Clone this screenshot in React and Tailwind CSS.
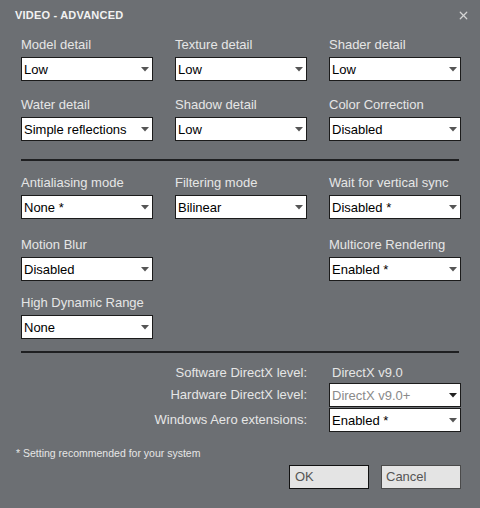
import { X } from 'lucide-react'

const font = { fontFamily: '"Liberation Sans", Arial, sans-serif' }

const Arrow = ({ dark }) => (
  <svg width="8" height="5" viewBox="0 0 8 5" className="shrink-0">
    <path d="M0 0 L8 0 L4 4.5 Z" fill={dark ? '#222' : '#555'} />
  </svg>
)

const Select = ({ value, disabled }) => (
  <div className="h-6 w-[132px] bg-white border border-[#1b1b1b] flex items-center justify-between pl-[2px] pr-[3px]">
    <span className={`text-[13px] leading-none ${disabled ? 'text-[#8a8a8a]' : 'text-black'}`}>{value}</span>
    <Arrow dark={disabled} />
  </div>
)

const Field = ({ label, value }) => (
  <div className="flex flex-col w-[132px]">
    <div className="text-[13px] leading-4 text-[#e6e6e6] whitespace-nowrap mb-1">{label}</div>
    <Select value={value} />
  </div>
)

const Rule = () => <div className="h-[2px] bg-[#1e1f21] mx-[21px] w-[438px]" />

export default function App() {
  return (
    <div className="w-[480px] h-[508px] bg-[#6c6f73] overflow-hidden" style={font}>
      {/* title bar */}
      <div className="flex items-center justify-between pl-[15px] pr-[10px] pt-[8px] h-[22px]">
        <span className="text-[11px] font-bold text-[#f2f2f2] tracking-[0.2px]">VIDEO - ADVANCED</span>
        <X size={13} strokeWidth={2.2} className="text-[#d4d4d4]" />
      </div>

      {/* top block */}
      <div className="px-[21px] pt-[15px] grid grid-cols-[132px_132px_132px] gap-x-[22px] gap-y-[16px]">
        <Field label="Model detail" value="Low" />
        <Field label="Texture detail" value="Low" />
        <Field label="Shader detail" value="Low" />
        <Field label="Water detail" value="Simple reflections" />
        <Field label="Shadow detail" value="Low" />
        <Field label="Color Correction" value="Disabled" />
      </div>

      <div className="mt-[18px]"><Rule /></div>

      <div className="px-[21px] pt-[14px] grid grid-cols-[132px_132px_132px] gap-x-[22px] gap-y-[16px]">
        <Field label="Antialiasing mode" value="None *" />
        <Field label="Filtering mode" value="Bilinear" />
        <Field label="Wait for vertical sync" value="Disabled *" />
        <div className="pt-[2px]"><Field label="Motion Blur" value="Disabled" /></div>
        <div />
        <div className="pt-[2px]"><Field label="Multicore Rendering" value="Enabled *" /></div>
        <div className="-mt-[2px]"><Field label="High Dynamic Range" value="None" /></div>
      </div>

      <div className="mt-[12px]"><Rule /></div>

      {/* directx block */}
      <div className="pl-[21px] pt-[10px] grid grid-cols-[286px_132px] gap-x-[22px] items-center text-[13px] text-[#e6e6e6]">
        <div className="text-right h-[19px] leading-[19px]">Software DirectX level:</div>
        <div className="h-[19px] leading-[19px] pl-[3px]">DirectX v9.0</div>
        <div className="text-right">Hardware DirectX level:</div>
        <div className="mt-[1px]"><Select value="DirectX v9.0+" disabled /></div>
        <div className="text-right">Windows Aero extensions:</div>
        <div className="mt-[1px]"><Select value="Enabled *" /></div>
      </div>

      <div className="pl-[16px] mt-[13px] text-[10.5px] text-[#e6e6e6] leading-4">* Setting recommended for your system</div>

      <div className="flex justify-end gap-[12px] pr-[19px] mt-[4px]">
        <button className="w-[80px] h-6 bg-[#e4e4e4] border border-[#111] text-left pl-[5px] text-[13px] text-[#555]">OK</button>
        <button className="w-[80px] h-6 bg-[#e4e4e4] border border-[#4a4a4a] text-left pl-[4px] text-[13px] text-[#555]">Cancel</button>
      </div>
    </div>
  )
}
